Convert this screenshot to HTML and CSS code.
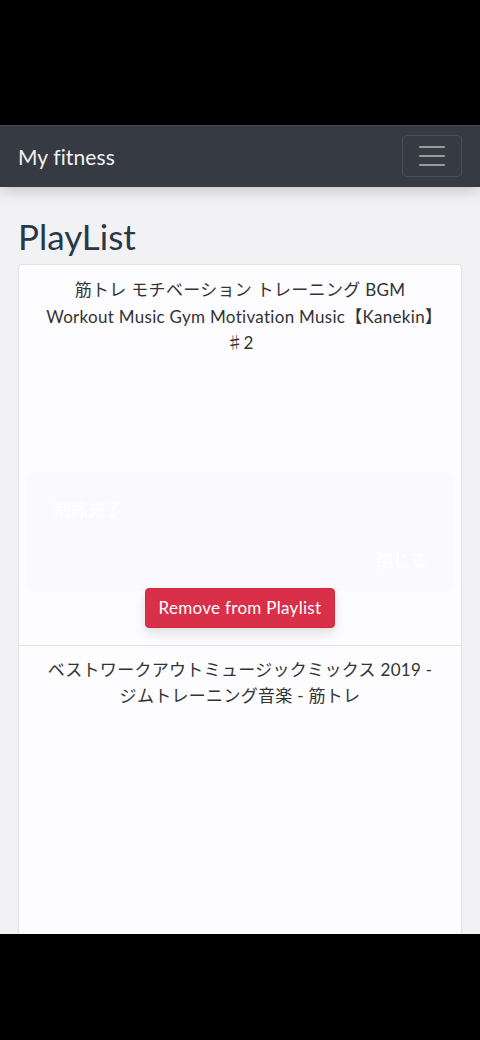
FILE: index.html
```html
<!DOCTYPE html>
<html lang="ja">
<head>
<meta charset="utf-8">
<title>My fitness</title>
<link rel="stylesheet" href="styles.css">
</head>
<body>
<div class="bar-top"></div>
<div class="app">
  <nav class="navbar">
    <span class="brand">My fitness</span>
    <button class="toggler" aria-label="menu">
      <span class="tline"></span><span class="tline"></span><span class="tline"></span>
    </button>
  </nav>
  <main class="content">
    <h1 class="title">PlayList</h1>
    <div class="list">
      <section class="item">
        <p class="item-title">筋トレ モチベーション トレーニング BGM Workout Music Gym Motivation Music【Kanekin】♯2</p>
        <div class="video"></div>
        <div class="toast">
          <span class="toast-msg">削除完了</span>
          <span class="toast-close">閉じる</span>
        </div>
        <button class="btn-remove">Remove from Playlist</button>
      </section>
      <section class="item item-second">
        <p class="item-title">ベストワークアウトミュージックミックス 2019 - ジムトレーニング音楽 - 筋トレ</p>
      </section>
    </div>
  </main>
</div>
<div class="bar-bottom"></div>
</body>
</html>
```

FILE: styles.css
```css
html, body {
  margin: 0;
  padding: 0;
  background: #000;
}
body {
  width: 480px;
  height: 1040px;
  overflow: hidden;
  font-family: Lato, "Noto Sans CJK JP", sans-serif;
}
.bar-top {
  height: 125px;
  background: #000;
  border-bottom: 1px solid #4a4c52;
}
.app {
  height: 808px;
  background: #f2f2f5;
  overflow: hidden;
  display: flex;
  flex-direction: column;
}
.bar-bottom {
  height: 106px;
  background: #000;
}
.navbar {
  height: 61px;
  flex: none;
  background: #363a42;
  display: flex;
  align-items: center;
  justify-content: space-between;
  padding: 0 18px;
  box-shadow: 0 4px 14px rgba(0,0,0,0.18);
  position: relative;
  z-index: 2;
}
.brand {
  color: #f2f2f2;
  font-size: 21px;
  letter-spacing: 0.1px;
  margin-top: -1px;
}
.toggler {
  width: 60px;
  height: 42px;
  box-sizing: border-box;
  border: 1px solid rgba(255,255,255,0.1);
  border-radius: 5px;
  background: transparent;
  display: flex;
  flex-direction: column;
  align-items: center;
  justify-content: center;
  gap: 7px;
  padding: 0;
  margin-top: -2px;
}
.tline {
  display: block;
  width: 26px;
  height: 2px;
  background: #9a9ca1;
  border-radius: 1px;
}
.content {
  padding: 0 18px;
}
.title {
  margin: 27px 0 6px;
  font-size: 35px;
  font-weight: 400;
  color: #283848;
  line-height: 44px;
}
.list {
  background: #fdfcff;
  border: 1px solid #e3e3e7;
  border-radius: 4px;
}
.item {
  display: flex;
  flex-direction: column;
  align-items: center;
  padding: 12px 8px 17px;
}
.item-second {
  border-top: 1px solid #e3e3e7;
  height: 400px;
  padding-top: 11px;
}
.item-title {
  margin: 0;
  width: 392px;
  text-align: center;
  font-size: 17px;
  line-height: 26.5px;
  letter-spacing: 0.3px;
  color: #333;
}
.video {
  height: 116px;
  align-self: stretch;
}
.toast {
  align-self: stretch;
  height: 118px;
  background: #faf9fd;
  border-radius: 9px;
  position: relative;
  margin-bottom: -3px;
}
.toast-msg {
  position: absolute;
  left: 27px;
  top: 23px;
  color: #ffffff;
  font-size: 17px;
  font-weight: 700;
}
.toast-close {
  position: absolute;
  right: 26px;
  top: 74px;
  color: #ffffff;
  font-size: 17px;
  font-weight: 700;
}
.btn-remove {
  font-family: Lato, "Noto Sans CJK JP", sans-serif;
  font-size: 17px;
  letter-spacing: 0.3px;
  color: #fff;
  background: #d92f48;
  border: 1px solid #d4283f;
  border-radius: 4px;
  width: 190px;
  height: 40px;
  box-shadow: 0 6px 12px rgba(0,0,0,0.12);
  position: relative;
  z-index: 1;
}
```
